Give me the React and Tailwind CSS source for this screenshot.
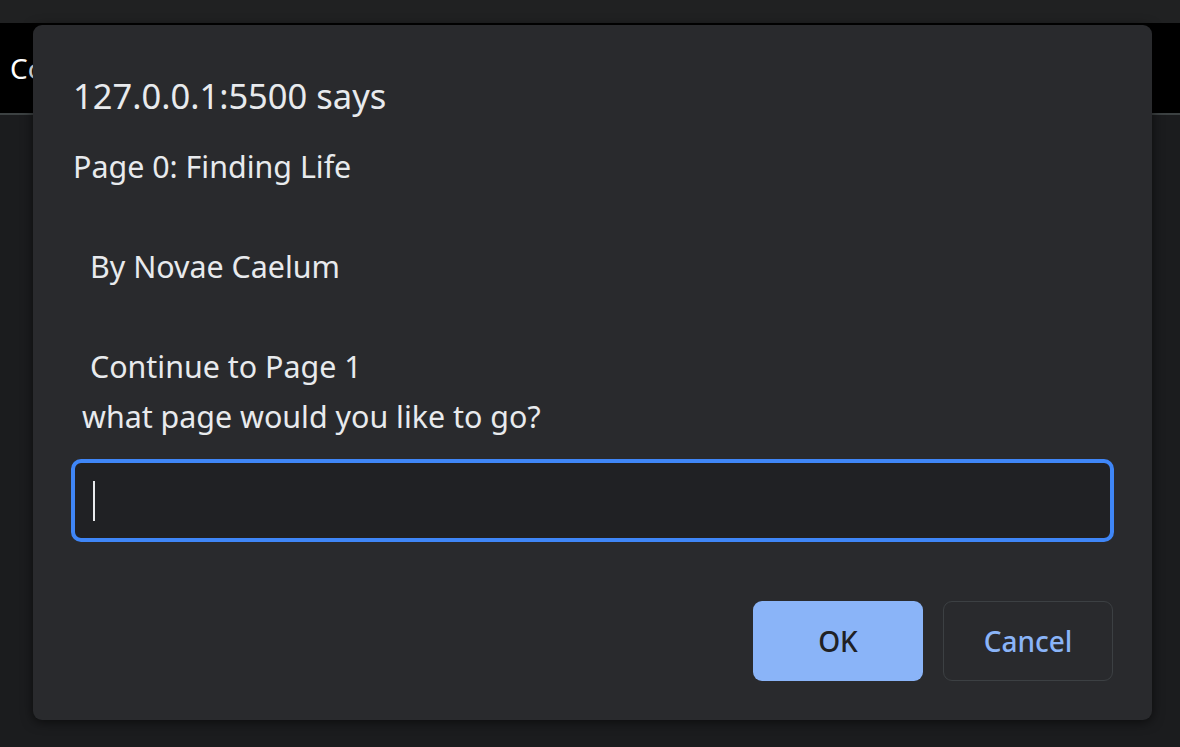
import React from 'react'

const font = { fontFamily: '"Noto Sans", "Open Sans", sans-serif' }

export default function App() {
  return (
    <div className="relative w-[1180px] h-[747px] overflow-hidden bg-[#1b1c1e]" style={font}>
      {/* page behind the dialog */}
      <div className="h-[23px] bg-[#202122]" />
      <div className="h-[90px] bg-black flex items-center pl-[10px] text-[28px] text-white">
        Co
      </div>
      <div className="h-[2px] bg-[#3c4142]" />

      {/* prompt dialog */}
      <div className="absolute left-[33px] top-[25px] w-[1119px] h-[695px] rounded-[9px] bg-[#292a2d] shadow-[0_2px_12px_rgba(0,0,0,0.6)] px-[38px] pt-[51px] text-[#e8eaed]">
        <div className="text-[34.5px] leading-[40px] pl-[2px]">127.0.0.1:5500 says</div>
        <div className="mt-[26px] text-[30.4px] leading-[50px]">
          <div className="pl-[2px]">Page 0: Finding Life</div>
          <div className="h-[50px]" />
          <div className="pl-[19px]">By Novae Caelum</div>
          <div className="h-[50px]" />
          <div className="pl-[19px]">Continue to Page 1</div>
          <div className="pl-[11px]">what page would you like to go?</div>
        </div>
        <div className="mt-[17px] h-[83px] rounded-[10px] border-[4px] border-[#3f86f7] bg-[#202124] flex items-center pl-[18px]">
          <span className="w-[2px] h-[40px] bg-[#e8eaed]" />
        </div>
        <div className="mt-[59px] flex justify-end gap-[20px] pr-[1px]">
          <button className="w-[170px] h-[80px] rounded-[9px] bg-[#8ab4f8] text-[#202124] text-[28px] font-medium">
            OK
          </button>
          <button className="w-[170px] h-[80px] rounded-[9px] border border-[#3c4043] text-[#8ab4f8] text-[28px] font-medium">
            Cancel
          </button>
        </div>
      </div>
    </div>
  )
}
